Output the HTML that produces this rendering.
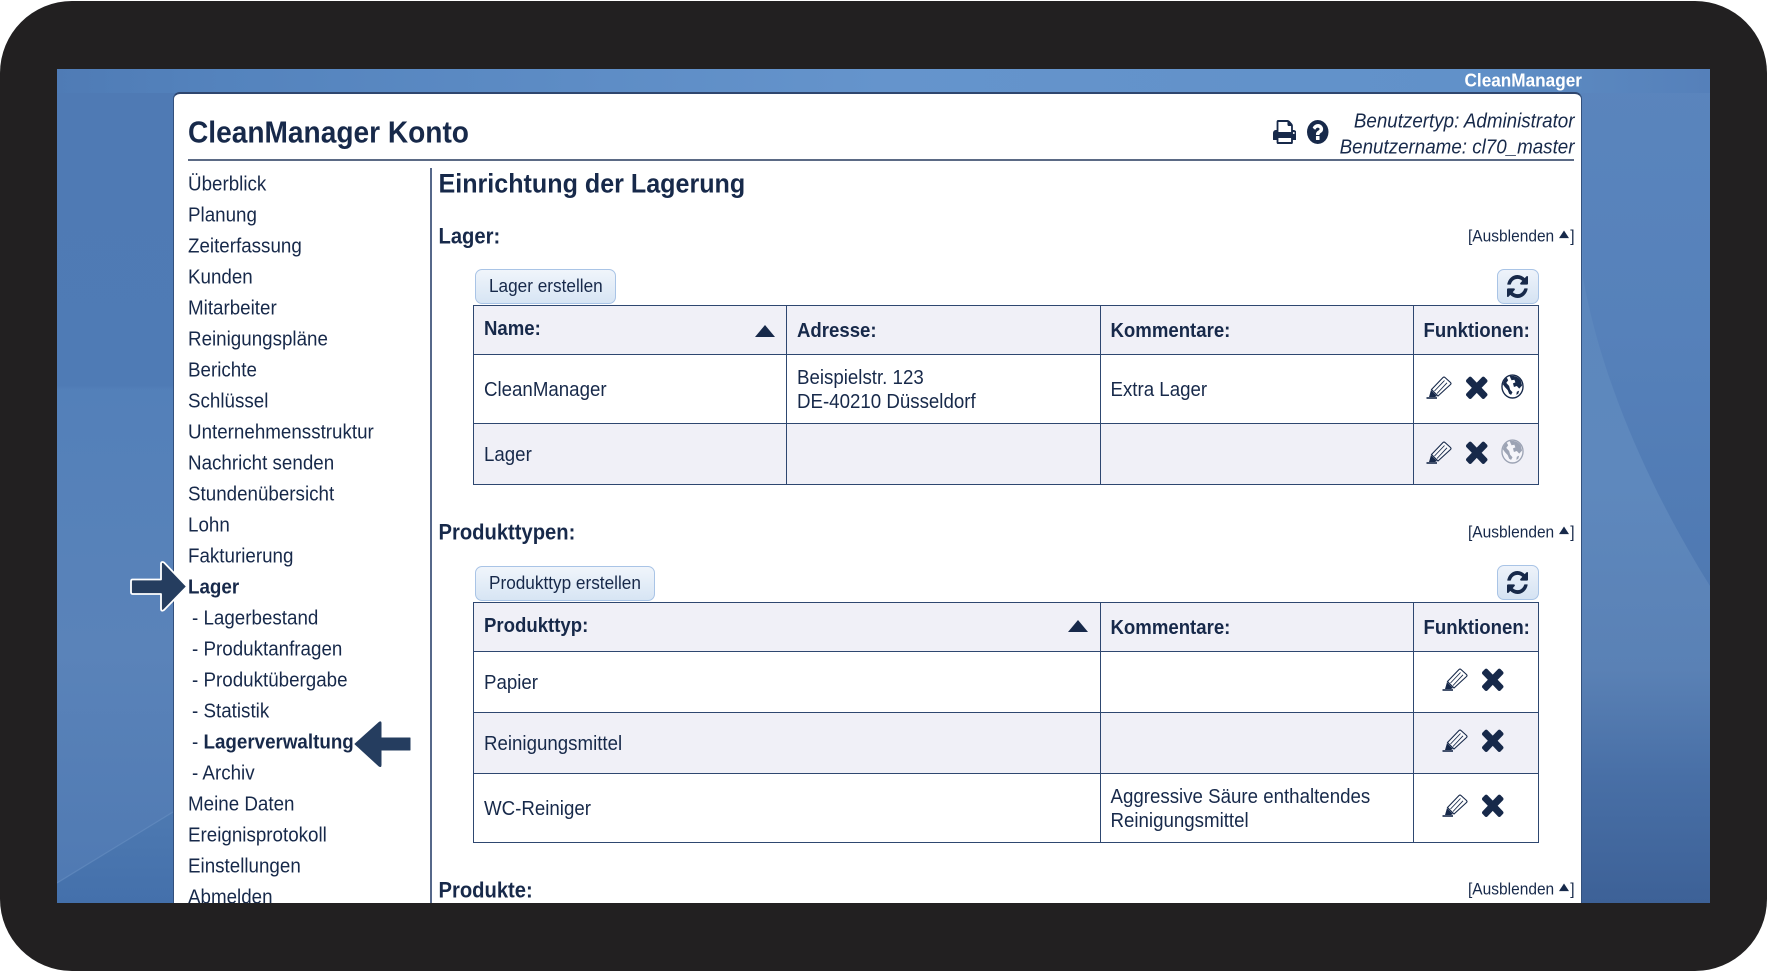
<!DOCTYPE html>
<html lang="de">
<head>
<meta charset="utf-8">
<title>CleanManager Konto</title>
<style>
html,body{margin:0;padding:0;background:#fff;width:1767px;height:971px;overflow:hidden}
*{box-sizing:border-box}
body{font-family:"Liberation Sans",sans-serif;color:#17294a}
#frame{position:absolute;left:0;top:1px;width:1767px;height:970px;background:#222021;border-radius:72px}
#screen{position:absolute;left:57px;top:69px;width:1653px;height:834px;overflow:hidden;background:#5580b8}
#screen>svg.bg{position:absolute;left:0;top:0}
#panel{position:absolute;left:116px;top:23px;width:1409px;height:830px;background:#fff;border:1px solid #33507c;border-top:2px solid #2f466e;border-radius:7px 7px 0 0}
.t{position:absolute;white-space:nowrap;line-height:30px;height:30px;transform:scaleY(1.08)}
.m{font-size:18.8px;left:131px}
.s{left:135px}
.b{font-weight:bold}
.l{font-size:20.2px;font-weight:bold;left:381.500px}
.hide{font-size:15.5px;right:135.500px}
.hide i{display:inline-block;width:0;height:0;border-left:5px solid transparent;border-right:5px solid transparent;border-bottom:7px solid #17294a;margin:0 1px 5px 5px;vertical-align:middle}
.btn{position:absolute;height:35px;border:1px solid #a9c4e6;border-radius:7px;background:linear-gradient(#f0f5fb,#d7e5f4);font-size:17.2px;line-height:31px;padding-left:13px;white-space:nowrap}
.ref{position:absolute;width:41.500px;height:35px;border:1px solid #a9c4e6;border-radius:7px;background:linear-gradient(#eef3fa,#d5e3f3)}
.ref svg{position:absolute;left:8.500px;top:5px}
table{position:absolute;border-collapse:collapse;table-layout:fixed;left:416px;width:1065px;font-size:18.7px}
td,th{border:1.4px solid #2e4770;padding:0 0 0 10px;text-align:left;vertical-align:middle;overflow:hidden;white-space:nowrap}
th{background:#f0f0f7;font-size:18.6px}
tr.a td{background:#f0f0f7}
.v{display:inline-block;line-height:21.800px;transform:translateY(.6px) scaleY(1.08)}
.ic{position:absolute}
.tri{position:absolute;width:0;height:0;border-left:10px solid transparent;border-right:10px solid transparent;border-bottom:12px solid #17294a}
</style>
</head>
<body>
<div id="frame"></div>
<div id="screen">
<svg class="bg" width="1653" height="834" viewBox="0 0 1653 834">
<defs>
<linearGradient id="g1" x1="0" y1="0" x2="0" y2="1"><stop offset="0" stop-color="#4f7ab4"/><stop offset=".38" stop-color="#4f7bb5"/><stop offset=".385" stop-color="#5380b9"/><stop offset=".7" stop-color="#5a83b9"/><stop offset="1" stop-color="#4f79b2"/></linearGradient>
<linearGradient id="g2" x1="0" y1="0" x2="1" y2="0"><stop offset="0" stop-color="#4f7bb5"/><stop offset=".1" stop-color="#5483bd"/><stop offset=".5" stop-color="#6594cc"/><stop offset=".85" stop-color="#6191c9"/><stop offset=".925" stop-color="#5a87bf"/><stop offset="1" stop-color="#5580ba"/></linearGradient>
<linearGradient id="g3" x1="0" y1="0" x2="0" y2="1"><stop offset="0" stop-color="#5a86bd"/><stop offset=".5" stop-color="#5e88bd"/><stop offset=".72" stop-color="#5a81b5"/><stop offset=".85" stop-color="#486fa6"/><stop offset="1" stop-color="#3d6197"/></linearGradient>
<linearGradient id="g4" gradientUnits="userSpaceOnUse" x1="0" y1="0" x2="0" y2="517"><stop offset="0" stop-color="#5a85bd"/><stop offset=".5" stop-color="#5681ba"/><stop offset="1" stop-color="#4f79b2"/></linearGradient>
<linearGradient id="g5" x1="0" y1="0" x2="0" y2="1"><stop offset="0" stop-color="#4d79b1"/><stop offset="1" stop-color="#4470ab"/></linearGradient>
</defs>
<rect x="0" y="0" width="120" height="834" fill="url(#g1)"/>
<polygon points="0,814 116,743 120,743 120,834 0,834" fill="url(#g5)"/>
<line x1="0" y1="814" x2="116" y2="743" stroke="#7097c8" stroke-width="1.2" opacity=".45"/>
<rect x="1520" y="0" width="133" height="834" fill="url(#g3)"/>
<path d="M1524 0 L1653 0 L1653 517 C1580 400 1540 290 1526 208 Z" fill="url(#g4)"/>
<rect x="0" y="0" width="1653" height="24" fill="url(#g2)"/>
</svg>

<div id="panel"></div>

<div class="t b" style="left:1407.500px;top:-4px;color:#fff;font-size:17.2px">CleanManager</div>

<div class="t b" style="left:131px;top:49px;font-size:28.1px">CleanManager Konto</div>
<div style="position:absolute;left:131px;top:90px;width:1386px;height:2px;background:#5b6a85"></div>
<div style="position:absolute;left:373px;top:99px;width:1.5px;height:740px;background:#56688a"></div>

<svg class="ic" style="left:1215.500px;top:51px" width="23.5" height="24" viewBox="64 128 1664 1536" preserveAspectRatio="none" fill="#17294a"><path d="M448 1536h896v-256h-896v256zm0-640h896v-384h-160q-40 0-68-28t-28-68v-160h-640v640zm1152 64q0-26-19-45t-45-19-45 19-19 45 19 45 45 19 45-19 19-45zm128 0v416q0 13-9.500 22.500t-22.500 9.500h-224v160q0 40-28 68t-68 28h-960q-40 0-68-28t-28-68v-160h-224q-13 0-22.500-9.500t-9.500-22.500v-416q0-79 56.500-135.500t135.500-56.500h64v-544q0-40 28-68t68-28h672q40 0 88 20t76 48l152 152q28 28 48 76t20 88v256h64q79 0 135.500 56.500t56.500 135.500z"/></svg>
<svg class="ic" style="left:1250px;top:51px" width="21.500" height="24" viewBox="128 128 1536 1536" preserveAspectRatio="none" fill="#17294a"><path d="M1024 1376v-192q0-14-9-23t-23-9h-192q-14 0-23 9t-9 23v192q0 14 9 23t23 9h192q14 0 23-9t9-23zm256-672q0-88-55.500-163t-138.500-116-170-41q-243 0-371 213-15 24 8 42l132 100q7 6 19 6 16 0 25-12 53-68 86-92 34-24 86-24 48 0 85.500 26t37.500 59q0 38-20 61t-68 45q-63 28-115.500 86.500t-52.500 125.500v36q0 14 9 23t23 9h192q14 0 23-9t9-23q0-19 21.500-49.500t54.500-49.500q32-18 49-28.500t46-35 44.500-48 28-60.500 12.500-81zm384 192q0 209-103 385.500t-279.500 279.500-385.500 103-385.500-103-279.500-279.500-103-385.500 103-385.500 279.500-279.500 385.500-103 385.500 103 279.500 279.500 103 385.500z"/></svg>

<div class="t" style="right:135.500px;top:36.500px;font-size:18.8px;font-style:italic">Benutzertyp: Administrator</div>
<div class="t" style="right:135.500px;top:62.500px;font-size:18.8px;font-style:italic">Benutzername: cl70_master</div>

<!-- Menu -->
<div class="t m" style="top:99.500px">Überblick</div>
<div class="t m" style="top:131px">Planung</div>
<div class="t m" style="top:162px">Zeiterfassung</div>
<div class="t m" style="top:193px">Kunden</div>
<div class="t m" style="top:224px">Mitarbeiter</div>
<div class="t m" style="top:255px">Reinigungspläne</div>
<div class="t m" style="top:286px">Berichte</div>
<div class="t m" style="top:317px">Schlüssel</div>
<div class="t m" style="top:348px">Unternehmensstruktur</div>
<div class="t m" style="top:379px">Nachricht senden</div>
<div class="t m" style="top:410px">Stundenübersicht</div>
<div class="t m" style="top:441px">Lohn</div>
<div class="t m" style="top:472px">Fakturierung</div>
<div class="t m b" style="top:503px">Lager</div>
<div class="t m s" style="top:534px">- Lagerbestand</div>
<div class="t m s" style="top:565px">- Produktanfragen</div>
<div class="t m s" style="top:596px">- Produktübergabe</div>
<div class="t m s" style="top:627px">- Statistik</div>
<div class="t m s" style="top:658px">- <span class="b">Lagerverwaltung</span></div>
<div class="t m s" style="top:689px">- Archiv</div>
<div class="t m" style="top:720px">Meine Daten</div>
<div class="t m" style="top:751px">Ereignisprotokoll</div>
<div class="t m" style="top:782px">Einstellungen</div>
<div class="t m" style="top:813px">Abmelden</div>

<!-- Arrows -->
<svg class="ic" style="left:70.500px;top:488px" width="65" height="60" viewBox="0 0 65 60"><path d="M4.500 22.500 H33 V7 Q33 4 36 5.500 L59 29.500 L36 53 Q33 55 33 51.500 V37 H4.500 Q3 37 3 35 V24.500 Q3 22.500 4.500 22.500 Z" fill="#253d5f" stroke="#fff" stroke-width="1.8" stroke-linejoin="round"/></svg>
<svg class="ic" style="left:294.500px;top:650px" width="62" height="50" viewBox="0 0 62 50"><path d="M58 19 H29 V4 Q29 2 27 3.500 L3 25 L27 47 Q29 48.500 29 46 V31 H58 V19 Z" fill="#253d5f" stroke="#253d5f" stroke-width="1" stroke-linejoin="round"/></svg>

<!-- Content -->
<div class="t b" style="left:381.500px;top:100px;font-size:25.1px">Einrichtung der Lagerung</div>

<div class="t l" style="top:153.300px">Lager:</div>
<div class="t hide" style="top:152.500px">[Ausblenden<i></i>]</div>

<div class="btn" style="left:418px;top:200px;width:141px"><span class="v">Lager erstellen</span></div>
<div class="ref" style="left:1440px;top:199.500px"><svg width="21" height="23" viewBox="128 128 1536 1536" preserveAspectRatio="none" fill="#17294a"><path d="M1639 1056q0 5-1 7-64 268-268 434.500t-478 166.500q-146 0-282.500-55t-243.500-157l-129 129q-19 19-45 19t-45-19-19-45v-448q0-26 19-45t45-19h448q26 0 45 19t19 45-19 45l-137 137q71 66 161 102t187 36q134 0 250-65t186-179q11-17 53-117 8-23 30-23h192q13 0 22.500 9.500t9.500 22.500zm25-800v448q0 26-19 45t-45 19h-448q-26 0-45-19t-19-45 19-45l138-138q-148-137-349-137-134 0-250 65t-186 179q-11 17-53 117-8 23-30 23h-199q-13 0-22.500-9.500t-9.500-22.500v-7q65-268 270-434.500t480-166.500q146 0 284 55.500t245 156.500l130-129q19-19 45-19t45 19 19 45z"/></svg></div>

<table style="top:235.500px">
<colgroup><col style="width:313px"><col style="width:313.500px"><col style="width:313px"><col style="width:125.500px"></colgroup>
<tr style="height:49px"><th style="padding-bottom:4px"><span class="v">Name:</span></th><th><span class="v">Adresse:</span></th><th><span class="v">Kommentare:</span></th><th><span class="v">Funktionen:</span></th></tr>
<tr style="height:69px"><td><span class="v">CleanManager</span></td><td><span class="v">Beispielstr. 123<br>DE-40210 Düsseldorf</span></td><td><span class="v">Extra Lager</span></td><td></td></tr>
<tr class="a" style="height:61px"><td><span class="v">Lager</span></td><td></td><td></td><td></td></tr>
</table>
<div class="tri" style="left:698px;top:255.500px"></div>

<div class="t l" style="top:449.300px">Produkttypen:</div>
<div class="t hide" style="top:448.500px">[Ausblenden<i></i>]</div>

<div class="btn" style="left:418px;top:496.500px;width:180px"><span class="v">Produkttyp erstellen</span></div>
<div class="ref" style="left:1440px;top:496px"><svg width="21" height="23" viewBox="128 128 1536 1536" preserveAspectRatio="none" fill="#17294a"><path d="M1639 1056q0 5-1 7-64 268-268 434.500t-478 166.500q-146 0-282.500-55t-243.500-157l-129 129q-19 19-45 19t-45-19-19-45v-448q0-26 19-45t45-19h448q26 0 45 19t19 45-19 45l-137 137q71 66 161 102t187 36q134 0 250-65t186-179q11-17 53-117 8-23 30-23h192q13 0 22.500 9.500t9.500 22.500zm25-800v448q0 26-19 45t-45 19h-448q-26 0-45-19t-19-45 19-45l138-138q-148-137-349-137-134 0-250 65t-186 179q-11 17-53 117-8 23-30 23h-199q-13 0-22.500-9.500t-9.500-22.500v-7q65-268 270-434.500t480-166.500q146 0 284 55.500t245 156.500l130-129q19-19 45-19t45 19 19 45z"/></svg></div>

<table style="top:532.500px">
<colgroup><col style="width:626.500px"><col style="width:313px"><col style="width:125.500px"></colgroup>
<tr style="height:49.500px"><th style="padding-bottom:4px"><span class="v">Produkttyp:</span></th><th><span class="v">Kommentare:</span></th><th><span class="v">Funktionen:</span></th></tr>
<tr style="height:60.500px"><td><span class="v">Papier</span></td><td></td><td></td></tr>
<tr class="a" style="height:61px"><td><span class="v">Reinigungsmittel</span></td><td></td><td></td></tr>
<tr style="height:69px"><td><span class="v">WC-Reiniger</span></td><td><span class="v">Aggressive Säure enthaltendes<br>Reinigungsmittel</span></td><td></td></tr>
</table>
<div class="tri" style="left:1011px;top:551px"></div>

<div class="t l" style="top:806.500px">Produkte:</div>
<div class="t hide" style="top:806px">[Ausblenden<i></i>]</div>

<!-- Function icons -->
<svg width="0" height="0" style="position:absolute">
<defs>
<g id="pen"><path d="M0.500 23 H11" stroke="#17294a" stroke-width="1.6" fill="none"/><path d="M3 22 L5 15 L11 21 L9 22 Z" fill="#17294a"/><path d="M5.500 14.500 L17 2.500 Q18 1.500 19 2.500 L24.500 7.500 Q25.500 8.500 24.500 9.500 L12 21 Z" fill="#fff" fill-opacity=".6" stroke="#17294a" stroke-width="1.1"/><path d="M8.500 16 L18.500 5.500 M11 18.500 L21 7.800" stroke="#17294a" stroke-width=".9" fill="none"/></g>
<path id="x" d="M1490 1322q0 40-28 68l-136 136q-28 28-68 28t-68-28l-294-294-294 294q-28 28-68 28t-68-28l-136-136q-28-28-28-68t28-68l294-294-294-294q-28-28-28-68t28-68l136-136q28-28 68-28t68 28l294 294 294-294q28-28 68-28t68 28l136 136q28 28 28 68t-28 68l-294 294 294 294q28 28 28 68z" fill="#17294a"/>
<g id="globe"><circle cx="12" cy="12" r="11" fill="#fff" stroke="#17294a" stroke-width="1.4"/><path d="M9 2 C12 1.500 17 1.500 20.500 6 L22 11 L19 14 L16.500 11.500 L13.500 12.500 L12.500 9 L15 8 L14 5.500 L11 6 Z" fill="#17294a"/><path d="M2 10 C2.500 7 4 5 6 3.500 L7.500 6 L5.500 8.500 L8.500 11.500 L9.500 15 L12 17.500 L10.500 20 L8.500 19 L7 15.500 L4 12.500 Z" fill="#17294a"/><path d="M16.500 17 L19 16 L18 19 L16 20 Z" fill="#17294a"/></g>
</defs>
</svg>
<svg class="ic" style="left:1369px;top:306px" width="26" height="24"><use href="#pen"/></svg>
<svg class="ic" style="left:1407px;top:305px" width="23.500" height="25" viewBox="192 230 1298 1324" preserveAspectRatio="none"><use href="#x"/></svg>
<svg class="ic" style="left:1443.500px;top:305px" width="23" height="25" viewBox="0 0 24 24" preserveAspectRatio="none"><use href="#globe"/></svg>

<svg class="ic" style="left:1369px;top:371px" width="26" height="24"><use href="#pen"/></svg>
<svg class="ic" style="left:1407px;top:370px" width="23.500" height="25" viewBox="192 230 1298 1324" preserveAspectRatio="none"><use href="#x"/></svg>
<svg class="ic" style="left:1443.500px;top:370px;opacity:.38" width="23" height="25" viewBox="0 0 24 24" preserveAspectRatio="none"><use href="#globe"/></svg>

<svg class="ic" style="left:1385px;top:598px" width="26" height="24"><use href="#pen"/></svg>
<svg class="ic" style="left:1423px;top:597px" width="23.500" height="25" viewBox="192 230 1298 1324" preserveAspectRatio="none"><use href="#x"/></svg>
<svg class="ic" style="left:1385px;top:659px" width="26" height="24"><use href="#pen"/></svg>
<svg class="ic" style="left:1423px;top:658px" width="23.500" height="25" viewBox="192 230 1298 1324" preserveAspectRatio="none"><use href="#x"/></svg>
<svg class="ic" style="left:1385px;top:724px" width="26" height="24"><use href="#pen"/></svg>
<svg class="ic" style="left:1423px;top:723px" width="23.500" height="25" viewBox="192 230 1298 1324" preserveAspectRatio="none"><use href="#x"/></svg>
</div>
</body>
</html>
